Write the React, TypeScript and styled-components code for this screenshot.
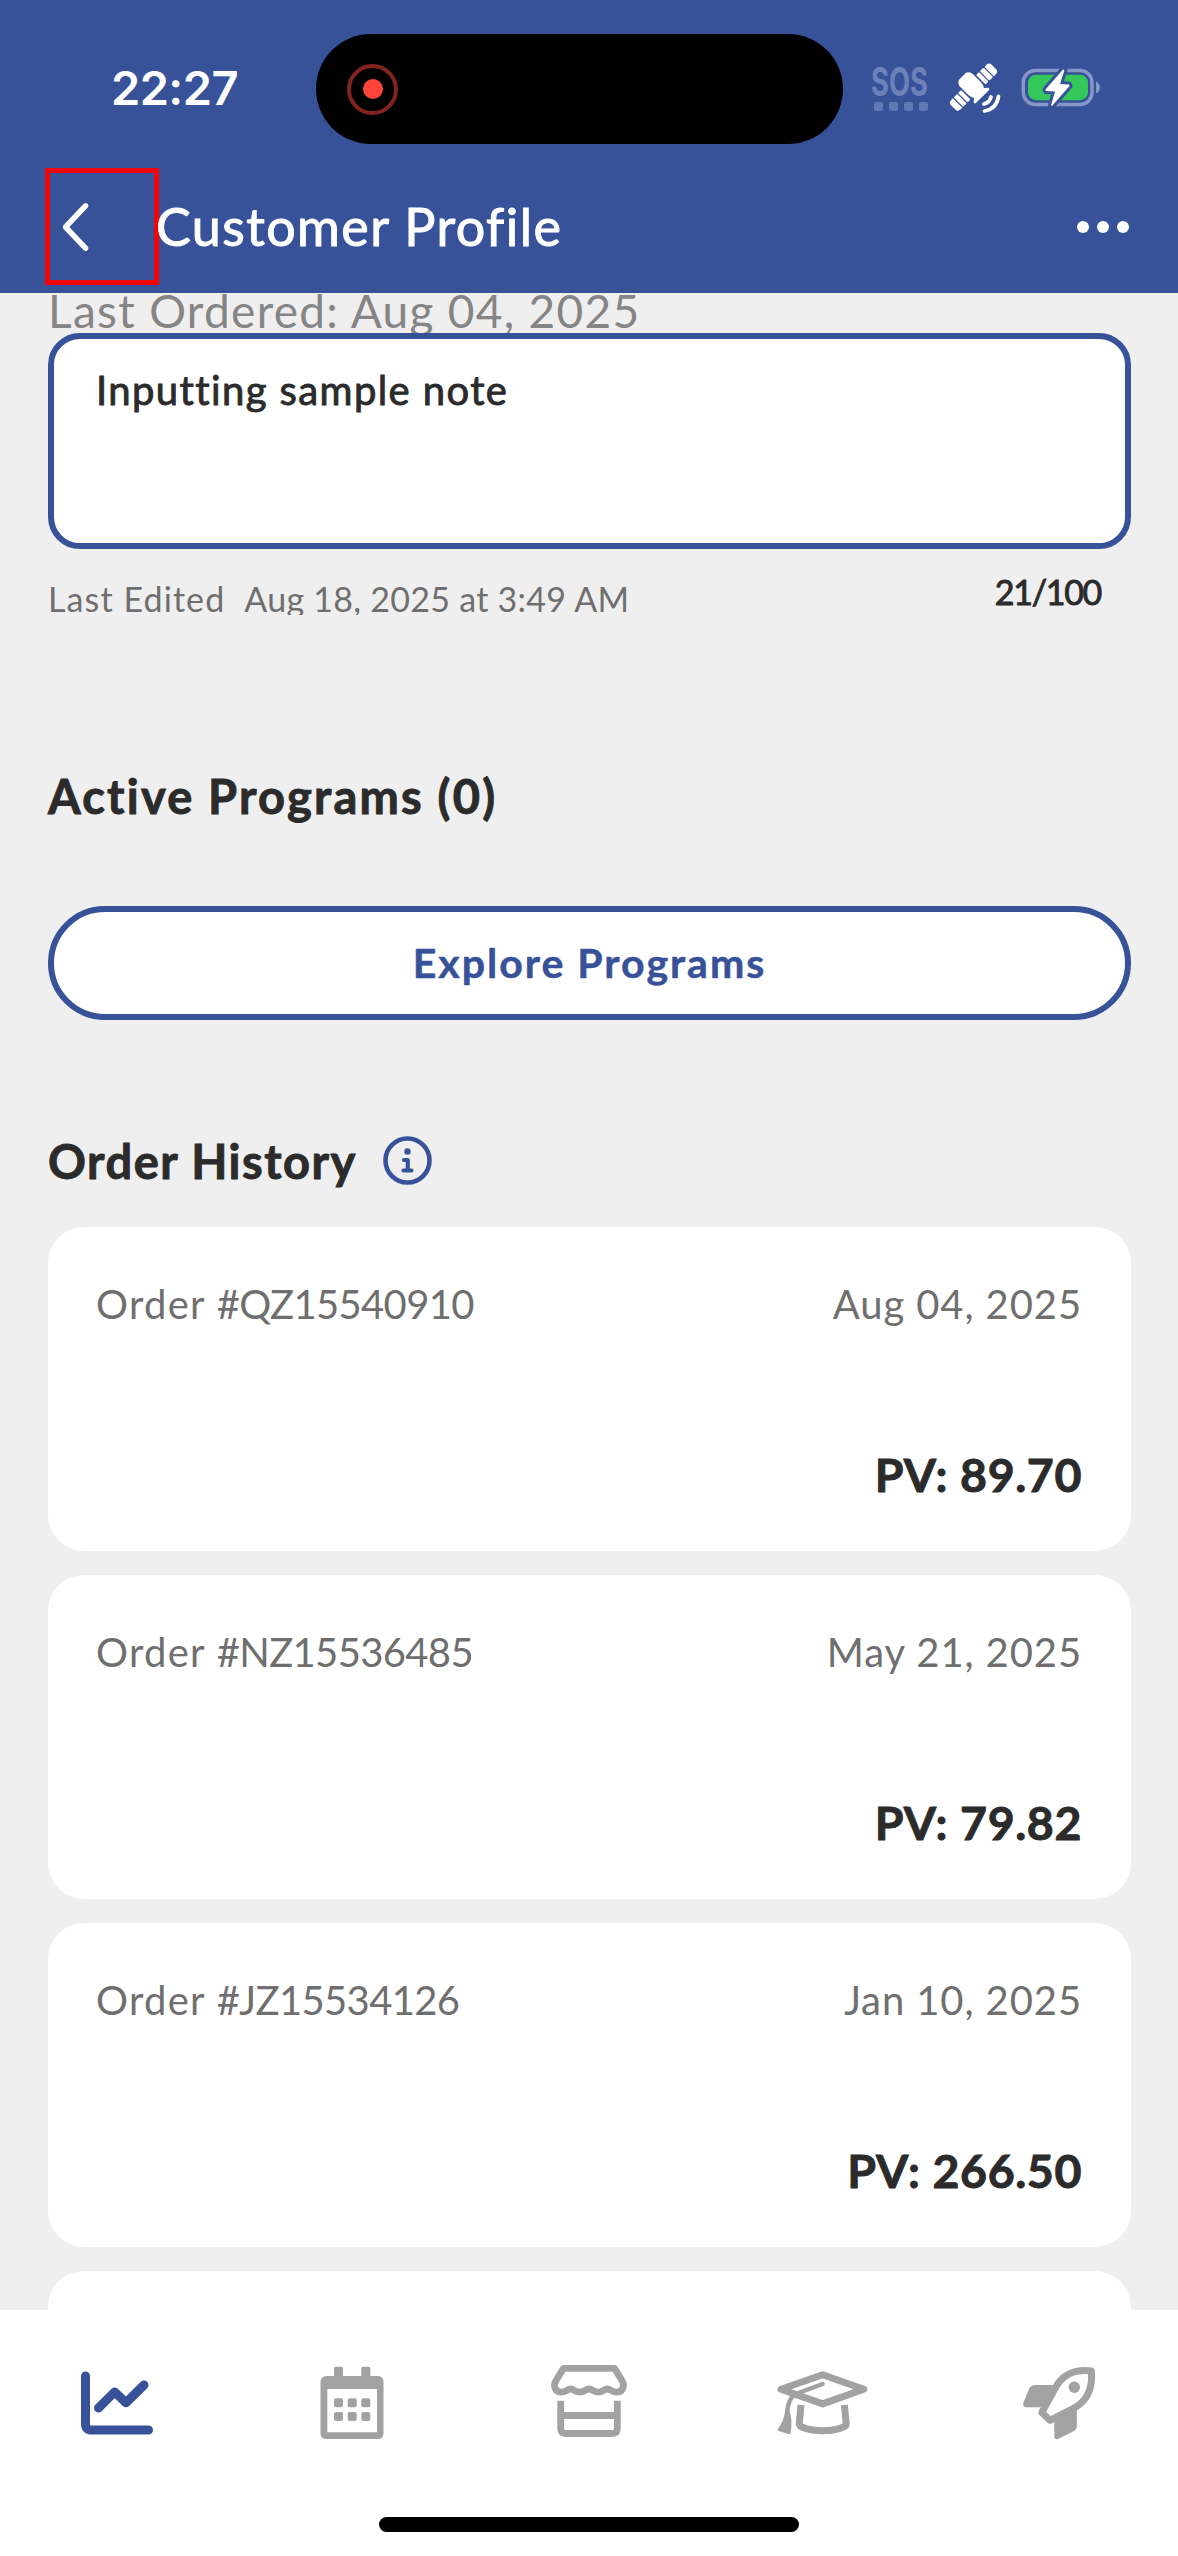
import React from "react";
import styled, { createGlobalStyle } from "styled-components";

const blue = "#385299";
const ink = "#2b2b2b";
const grey = "#6f6f6f";
const muted = "#a2a2a2";

const GlobalStyle = createGlobalStyle`
  * { box-sizing: border-box; }
  body { margin: 0; background: #efefef; }
  button { font: inherit; border: 0; background: none; padding: 0; margin: 0; }
`;

const Screen = styled.div`
  width: 1178px;
  height: 2556px;
  display: flex;
  flex-direction: column;
  overflow: hidden;
  background: #efefef;
  font-family: Lato, "Liberation Sans", sans-serif;
  font-variant-ligatures: none;
  line-height: 1.2;
  white-space: nowrap;
`;

const Header = styled.header`
  flex: none;
  height: 293px;
  background: ${blue};
  color: #fff;
`;

const StatusBar = styled.div`
  display: grid;
  grid-template-columns: 316px 527px 1fr;
  height: 144px;
  padding-top: 34px;
`;

const Clock = styled.div`
  padding: 27px 0 0 111px;
  font: 600 47px/54px Inter, "Liberation Sans", sans-serif;
  letter-spacing: -0.6px;
`;

const Island = styled.div`
  height: 110px;
  border-radius: 55px;
  background: #000;
  display: flex;
  align-items: center;
  padding-left: 31px;
`;

const RecordRing = styled.div`
  width: 51px;
  height: 51px;
  border: 4px solid #83231f;
  border-radius: 50%;
  display: grid;
  place-items: center;
  &::after {
    content: "";
    width: 20px;
    height: 20px;
    border-radius: 50%;
    background: #ff4539;
  }
`;

const StatusIcons = styled.div`
  display: flex;
  align-items: flex-start;
  padding-left: 28px;
`;

const SosBadge = styled.div`
  width: 74px;
  padding-top: 29px;
  color: #6c82b8;
`;

const SosText = styled.div`
  font: 700 39px/38px Inter, "Liberation Sans", sans-serif;
  transform: scaleX(0.7);
  transform-origin: left;
`;

const SosDots = styled.div`
  display: flex;
  gap: 6px;
  padding: 1px 0 0 3px;
`;

const SosDot = styled.i`
  width: 9px;
  height: 9px;
  border-radius: 2px;
  background: #6278b2;
`;

const Glyph = styled.svg<{ $top?: number }>`
  display: block;
  flex: none;
  margin-top: ${(p) => p.$top ?? 0}px;
`;

const NavBar = styled.div`
  display: flex;
  align-items: center;
  height: 117px;
  margin-top: 24px;
  padding: 0 49px 0 45px;
`;

const BackButton = styled.button`
  width: 114px;
  height: 117px;
  border: 5px solid #f20408;
  display: flex;
  align-items: center;
  padding-left: 10px;
`;

const Title = styled.h1`
  flex: 1;
  margin: 0 0 0 -3px;
  font-size: 52px;
  font-weight: 400;
  letter-spacing: 1.45px;
  -webkit-text-stroke: 1px currentColor;
`;

const MoreButton = styled.button`
  display: flex;
  gap: 8px;
`;

const MoreDot = styled.i`
  width: 12px;
  height: 12px;
  border-radius: 50%;
  background: #fff;
`;

const Content = styled.main`
  flex: 1;
  min-height: 0;
  overflow: hidden;
  padding: 0 47px 0 48px;
`;

const LastOrdered = styled.div`
  height: 40px;
  overflow: hidden;
  color: #858585;
  font-size: 46px;
  letter-spacing: 1.3px;
  > p { margin: -10px 0 0; }
`;

const NoteBox = styled.div`
  height: 216px;
  padding: 27px 42px;
  border: 6px solid ${blue};
  border-radius: 32px;
  background: #fff;
  color: ${ink};
  font-size: 40px;
  letter-spacing: 1.4px;
  -webkit-text-stroke: 0.9px currentColor;
`;

const NoteMeta = styled.div`
  display: flex;
  justify-content: space-between;
  align-items: flex-start;
  height: 218px;
  padding: 23px 30px 0 0;
  font-size: 34px;
`;

const Edited = styled.div`
  display: flex;
  gap: 19px;
  height: 36px;
  margin-top: 7px;
  overflow: hidden;
  color: ${grey};
`;

const EditedLabel = styled.span`
  letter-spacing: 1.1px;
`;

const EditedTime = styled.span`
  letter-spacing: 0.27px;
`;

const Counter = styled.div`
  color: ${ink};
  letter-spacing: -1.3px;
  -webkit-text-stroke: 0.9px currentColor;
`;

const SectionHead = styled.div`
  display: flex;
  align-items: center;
  gap: 26px;
  height: 57px;
`;

const SectionTitle = styled.h2<{ $tracking: number }>`
  margin: 2px 0 0;
  color: ${ink};
  font-size: 47px;
  font-weight: 700;
  letter-spacing: ${(p) => p.$tracking}px;
  -webkit-text-stroke: 0.9px currentColor;
`;

const ExploreButton = styled.button`
  display: block;
  width: 100%;
  height: 114px;
  margin: 82px 0 112px;
  border: 6px solid ${blue};
  border-radius: 57px;
  background: #fff;
  color: ${blue};
  font-size: 41px;
  font-weight: 700;
  letter-spacing: 2px;
  -webkit-text-stroke: 0.5px currentColor;
`;

const Orders = styled.div`
  display: flex;
  flex-direction: column;
  gap: 24px;
  margin-top: 38px;
`;

const OrderCard = styled.article`
  flex: none;
  height: 324px;
  padding: 53px 49px 48px 48px;
  border-radius: 36px;
  background: #fff;
  display: flex;
  flex-direction: column;
  justify-content: space-between;
`;

const OrderRow = styled.div`
  display: flex;
  justify-content: space-between;
  color: ${grey};
  font-size: 40px;
`;

const OrderLabel = styled.span`
  letter-spacing: 1.3px;
`;

const OrderNumber = styled.span`
  letter-spacing: -0.65px;
`;

const OrderDate = styled.span`
  letter-spacing: 0.9px;
`;

const Points = styled.div`
  align-self: flex-end;
  color: ${ink};
  font-size: 46.5px;
  font-weight: 700;
  letter-spacing: 0.6px;
  -webkit-text-stroke: 0.9px currentColor;
`;

const TabBar = styled.nav`
  flex: none;
  height: 246px;
  background: #fff;
  display: flex;
  flex-direction: column;
  align-items: center;
  justify-content: space-between;
  padding: 53px 0 24px;
`;

const Tabs = styled.div`
  width: 100%;
  display: grid;
  grid-template-columns: repeat(5, 1fr);
`;

const Tab = styled.button<{ $active?: boolean }>`
  display: grid;
  place-items: center;
  color: ${(p) => (p.$active ? blue : muted)};
`;

const HomeIndicator = styled.div`
  width: 420px;
  height: 15px;
  border-radius: 8px;
  background: #000;
`;

const Satellite = () => (
  <Glyph width="75" height="60" viewBox="0 0 75 60" fill="#fff" $top={24}>
    <g transform="translate(28.3 29.3) rotate(-45)">
      <path d="M-5-15.500H5Q9-13.500 9-9V2Q9 5 7 8L10.500 11Q11 13 9 13H-9Q-11 13-10.500 11L-7 8Q-9 5-9 2V-9Q-9-13.500-5-15.500Z" />
      <rect x="10.600" y="-6.700" width="4.200" height="13.400" rx="1" />
      <rect x="16" y="-6.700" width="5.200" height="13.400" rx="1" />
      <path d="M22.400-6.700H25Q29-6.700 29-3V3Q29 6.700 25 6.700H22.400Z" />
      <rect x="-14.800" y="-6.700" width="4.200" height="13.400" rx="1" />
      <rect x="-21" y="-6.700" width="5" height="13.400" rx="1" />
      <path d="M-22.200-6.700H-24.500Q-28.500-6.700-28.500-3V3Q-28.500 6.700-24.500 6.700H-22.200Z" />
    </g>
    <g fill="none" stroke="#fff" strokeWidth="3.800" strokeLinecap="round">
      <path d="M53.500 38.500Q51.500 51 39.500 53" />
      <path d="M46 39Q44.500 44.500 39 46" />
    </g>
  </Glyph>
);

const Battery = () => (
  <Glyph width="84" height="44" viewBox="0 0 84 44" $top={32}>
    <rect x="3.300" y="4.500" width="68.700" height="34" rx="12" fill="none" stroke="#8696c6" strokeWidth="3.400" />
    <rect x="8" y="8.700" width="60" height="25.500" rx="8" fill="#34c759" />
    <path d="M76 15.500Q80 17.500 80 21.500T76 27.500Z" fill="#8696c6" />
    <path
      d="M43 3.500L25.500 23.500L26 25L35 25.500L31 39.500L32 40L49.500 20L49 18.500L40 18L44.500 4Z"
      fill="#fff"
      stroke={blue}
      strokeWidth="6"
      strokeLinejoin="round"
      paintOrder="stroke"
    />
  </Glyph>
);

const Chevron = () => (
  <Glyph width="30" height="52" viewBox="0 0 30 52" fill="none" stroke="#fff" strokeWidth="5.500" strokeLinecap="round" strokeLinejoin="round">
    <path d="M25.500 4.800L5.500 26L25.500 47.200" />
  </Glyph>
);

const InfoIcon = () => (
  <Glyph width="49" height="49" viewBox="0 0 49 49" fill="none" stroke={blue} strokeWidth="4.600" strokeLinecap="round" strokeLinejoin="round">
    <circle cx="24.500" cy="24.500" r="22" />
    <circle cx="24.500" cy="15.500" r="3.200" fill={blue} stroke="none" />
    <path d="M21 24H24.800V34.500M20.500 34.500H28.500" strokeWidth="4.200" />
  </Glyph>
);

const ChartIcon = () => (
  <Glyph width="100" height="80" viewBox="0 0 100 80" fill="none" stroke="currentColor" strokeWidth="9" strokeLinecap="round" strokeLinejoin="round">
    <path d="M17.500 13V61Q17.500 67 23.500 67H80.500" />
    <path d="M30.500 45L46.700 28.900L58 39.800L76 22" />
  </Glyph>
);

const CalendarIcon = () => (
  <Glyph width="100" height="80" viewBox="0 0 100 80" fill="currentColor">
    <path fillRule="evenodd" d="M24 13H74.500Q80.500 13 80.500 19V70Q80.500 76 74.500 76H24Q17.500 76 17.500 70V19Q17.500 13 24 13ZM24.300 26V69.300H74V26Z" />
    {[31, 58.3].map((x) => (
      <rect key={x} x={x} y="3.800" width="9" height="12" rx="1.500" />
    ))}
    {[35.3, 49].map((y) => [31, 44.7, 58.3].map((x) => <rect key={`${x}-${y}`} x={x} y={y} width="9" height="9" rx="2" />))}
  </Glyph>
);

const StoreIcon = () => (
  <Glyph width="100" height="80" viewBox="0 0 100 80" fill="none" stroke="currentColor" strokeWidth="6.800" strokeLinejoin="round">
    <path d="M24.500 5.400H75.500L83 17.500C86.500 23.500 83 29.200 77.700 29.200C73 29.200 71.500 26 68.300 26S64 29.200 59.300 29.200S53.500 26 50 26S45.500 29.200 40.700 29.200S35 26 31.700 26S27 29.200 22.300 29.200C17 29.200 13.500 23.500 17 17.500Z" />
    <path d="M21.700 37.700V65.500Q21.700 70.500 26.700 70.500H73.300Q78.300 70.500 78.300 65.500V37.700M21.700 52.500H78.300" />
  </Glyph>
);

const GraduationIcon = () => (
  <Glyph width="100" height="80" viewBox="0 0 100 80" fill="none" stroke="currentColor" strokeWidth="7" strokeLinejoin="round">
    <path d="M47.700 11.800L88.800 26.300L47.700 40.900L6 26.300Z" />
    <path d="M47.700 21L20 31.200Q13.500 36 12.200 48" strokeWidth="4.400" strokeLinecap="round" />
    <path d="M10.200 47H14.200Q18 57 15.500 70.500L14 71.300L3.500 68L2.700 66Q9 58.500 10.200 47Z" fill="currentColor" stroke="none" />
    <path d="M26 42L24.200 61C24 64.500 35 67.700 47.700 67.700S71.300 64.500 71.200 61L69.400 42" />
  </Glyph>
);

const RocketIcon = () => (
  <Glyph width="100" height="80" viewBox="0 0 100 80" fill="currentColor">
    <path d="M43 22H25Q21 22 19 26L13.300 40Q12.500 44.300 16.500 44.300H32Z" />
    <path d="M66.800 45V64Q66.800 66.500 64 68L48 76Q44.300 77 44.300 73.500V56Z" />
    <path d="M81.300 7.900C62 6 51.500 13 45 25.500L31.800 49.500L40 57.300L65 44.500C78 37 83 25 81.300 7.900Z" fill="#fff" stroke="currentColor" strokeWidth="7" strokeLinejoin="round" />
    <circle cx="64.300" cy="24.300" r="5.700" />
  </Glyph>
);

const orders = [
  { id: "QZ15540910", date: "Aug 04, 2025", pv: "89.70" },
  { id: "NZ15536485", date: "May 21, 2025", pv: "79.82" },
  { id: "JZ15534126", date: "Jan 10, 2025", pv: "266.50" },
];

export default function App() {
  return (
    <Screen>
      <GlobalStyle />
      <Header>
        <StatusBar>
          <Clock>22:27</Clock>
          <Island>
            <RecordRing />
          </Island>
          <StatusIcons>
            <SosBadge>
              <SosText>SOS</SosText>
              <SosDots>
                <SosDot />
                <SosDot />
                <SosDot />
                <SosDot />
              </SosDots>
            </SosBadge>
            <Satellite />
            <Battery />
          </StatusIcons>
        </StatusBar>
        <NavBar>
          <BackButton aria-label="Back">
            <Chevron />
          </BackButton>
          <Title>Customer Profile</Title>
          <MoreButton aria-label="More">
            <MoreDot />
            <MoreDot />
            <MoreDot />
          </MoreButton>
        </NavBar>
      </Header>

      <Content>
        <LastOrdered>
          <p>Last Ordered: Aug 04, 2025</p>
        </LastOrdered>
        <NoteBox>Inputting sample note</NoteBox>
        <NoteMeta>
          <Edited>
            <EditedLabel>Last Edited</EditedLabel>
            <EditedTime>Aug 18, 2025 at 3:49 AM</EditedTime>
          </Edited>
          <Counter>21/100</Counter>
        </NoteMeta>

        <SectionHead>
          <SectionTitle $tracking={2.2}>Active Programs (0)</SectionTitle>
        </SectionHead>
        <ExploreButton>Explore Programs</ExploreButton>

        <SectionHead>
          <SectionTitle $tracking={1.5}>Order History</SectionTitle>
          <InfoIcon />
        </SectionHead>
        <Orders>
          {orders.map((o) => (
            <OrderCard key={o.id}>
              <OrderRow>
                <span>
                  <OrderLabel>Order </OrderLabel>
                  <OrderNumber>#{o.id}</OrderNumber>
                </span>
                <OrderDate>{o.date}</OrderDate>
              </OrderRow>
              <Points>PV: {o.pv}</Points>
            </OrderCard>
          ))}
          <OrderCard />
        </Orders>
      </Content>

      <TabBar>
        <Tabs>
          <Tab $active aria-label="Dashboard"><ChartIcon /></Tab>
          <Tab aria-label="Calendar"><CalendarIcon /></Tab>
          <Tab aria-label="Store"><StoreIcon /></Tab>
          <Tab aria-label="Training"><GraduationIcon /></Tab>
          <Tab aria-label="Launch"><RocketIcon /></Tab>
        </Tabs>
        <HomeIndicator />
      </TabBar>
    </Screen>
  );
}
